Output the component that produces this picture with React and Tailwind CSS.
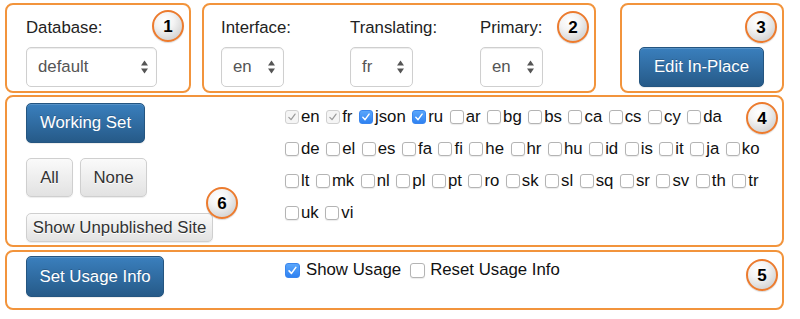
const rows = [
  [['en', 'lock'], ['fr', 'lock'], ['json', 'on'], ['ru', 'on'], 'ar', 'bg', 'bs', 'ca', 'cs', 'cy', 'da'],
  ['de', 'el', 'es', 'fa', 'fi', 'he', 'hr', 'hu', 'id', 'is', 'it', 'ja', 'ko'],
  ['lt', 'mk', 'nl', 'pl', 'pt', 'ro', 'sk', 'sl', 'sq', 'sr', 'sv', 'th', 'tr'],
  ['uk', 'vi'],
];

function Badge({ n, className }) {
  return (
    <div
      className={`absolute w-8 h-8 rounded-full border-2 border-[#ec7b2e] bg-[radial-gradient(circle_at_38%_30%,#ffffff_0%,#f4f4f4_35%,#c4c4c4_100%)] flex items-center justify-center text-[17px] font-bold text-black leading-none shadow-[0_1px_1px_rgba(0,0,0,0.15)] ${className}`}
    >
      {n}
    </div>
  );
}

function Check({ state, big }) {
  const size = big ? 'w-[15px] h-[15px]' : 'w-[14px] h-[14px]';
  if (state === 'on') {
    return (
      <span className={`${size} shrink-0 rounded-[3px] bg-[linear-gradient(to_bottom,#5aa6fb,#2f82f2)] border border-[#3a86ee] flex items-center justify-center`}>
        <svg viewBox="0 0 14 14" className="w-full h-full">
          <path d="M3.3 7.4 L5.9 10.1 L10.6 3.6" fill="none" stroke="#fff" strokeWidth="1.7" strokeLinecap="round" strokeLinejoin="round" />
        </svg>
      </span>
    );
  }
  if (state === 'lock') {
    return (
      <span className={`${size} shrink-0 rounded-[3px] bg-[#f5f5f5] border border-[#d0d0d0] flex items-center justify-center`}>
        <svg viewBox="0 0 14 14" className="w-full h-full">
          <path d="M3.3 7.4 L5.9 10.1 L10.6 3.6" fill="none" stroke="#9a9a9a" strokeWidth="1.4" strokeLinecap="round" strokeLinejoin="round" />
        </svg>
      </span>
    );
  }
  return (
    <span className={`${size} shrink-0 rounded-[3px] bg-white border border-[#b4b4b4] shadow-[0_1px_1px_rgba(0,0,0,0.08)]`} />
  );
}

function Select({ value, wide }) {
  return (
    <div
      className={`${wide ? 'w-[131px]' : 'w-[63px]'} h-[40px] rounded-[5px] border border-[#cfcfcf] bg-white shadow-[inset_0_1px_1px_rgba(0,0,0,0.075)] flex items-center justify-between pl-[11px] pr-[8px] text-[#555] text-[16.8px]`}
    >
      <span>{value}</span>
      <svg width="7" height="14" viewBox="0 0 7 14">
        <polygon points="3.5,0.5 7,5.5 0,5.5" fill="#555" />
        <polygon points="0,8.5 7,8.5 3.5,13.5" fill="#555" />
      </svg>
    </div>
  );
}

const primaryBtn =
  'rounded-[5px] border border-[#245580] bg-[linear-gradient(to_bottom,#3a7fbd,#265a88)] text-white text-[16.8px] [text-shadow:0_-1px_0_rgba(0,0,0,0.2)] shadow-[inset_0_1px_0_rgba(255,255,255,0.15),0_1px_1px_rgba(0,0,0,0.075)] flex items-center justify-center';
const defaultBtn =
  'rounded-[5px] border border-[#cfcfcf] bg-[linear-gradient(to_bottom,#fafafa,#e2e2e2)] text-[#333] text-[16.8px] [text-shadow:0_1px_0_#fff] shadow-[inset_0_1px_0_rgba(255,255,255,0.15),0_1px_1px_rgba(0,0,0,0.075)] flex items-center justify-center';

export default function App() {
  return (
    <div className="w-[800px] h-[319px] bg-white pt-[3px] pl-[5px] font-['Liberation_Sans',Arial,sans-serif] text-[#222] leading-[24px]">
      {/* top row */}
      <div className="flex h-[90px]">
        <div className="relative w-[186px] h-full border-2 border-[#f2943c] rounded-[8px] pt-[11px] pl-[19px]">
          <div className="text-[16.8px] mb-[7px]">Database:</div>
          <Select value="default" wide />
          <Badge n="1" className="left-[145px] top-[5px]" />
        </div>

        <div className="relative ml-[11px] w-[394px] h-full border-2 border-[#f2943c] rounded-[8px] pt-[11px] pl-[17px] flex">
          <div className="w-[129px]">
            <div className="text-[16.8px] mb-[7px]">Interface:</div>
            <Select value="en" />
          </div>
          <div className="w-[130px]">
            <div className="text-[16.8px] mb-[7px]">Translating:</div>
            <Select value="fr" />
          </div>
          <div>
            <div className="text-[16.8px] mb-[7px]">Primary:</div>
            <Select value="en" />
          </div>
          <Badge n="2" className="left-[353px] top-[6px]" />
        </div>

        <div className="relative ml-[24px] w-[164px] h-full border-2 border-[#f2943c] rounded-[8px] pt-[42px] pl-[17px]">
          <button className={`${primaryBtn} w-[125px] h-[40px]`}>Edit In-Place</button>
          <Badge n="3" className="left-[123px] top-[6px]" />
        </div>
      </div>

      {/* working set */}
      <div className="relative mt-[2px] w-[779px] h-[152px] border-2 border-[#f2943c] rounded-[8px] flex">
        <div className="w-[278px] shrink-0 pt-[6px] pl-[19px]">
          <button className={`${primaryBtn} w-[119px] h-[40px]`}>Working Set</button>
          <div className="flex gap-[7px] mt-[15px]">
            <button className={`${defaultBtn} w-[47px] h-[39px]`}>All</button>
            <button className={`${defaultBtn} w-[67px] h-[39px]`}>None</button>
          </div>
          <button className={`${defaultBtn} mt-[16px] w-[187px] h-[29px]`}>Show Unpublished Site</button>
        </div>
        <div className="pt-[4px] text-[16.8px] text-[#111]">
          {rows.map((row, i) => (
            <div key={i} className="h-[32px] flex items-center gap-x-[6.5px]">
              {row.map((item) => {
                const [code, state] = Array.isArray(item) ? item : [item, 'off'];
                return (
                  <label key={code} className="flex items-center gap-[2px]">
                    <Check state={state} />
                    <span>{code}</span>
                  </label>
                );
              })}
            </div>
          ))}
        </div>
        <Badge n="4" className="left-[739px] top-[5px]" />
        <Badge n="6" className="left-[199px] top-[90px]" />
      </div>

      {/* usage */}
      <div className="relative mt-[3px] w-[779px] h-[60px] border-2 border-[#f2943c] rounded-[8px] flex items-start">
        <div className="w-[278px] shrink-0 pt-[4px] pl-[19px]">
          <button className={`${primaryBtn} w-[138px] h-[41px]`}>Set Usage Info</button>
        </div>
        <div className="mt-[6px] h-[24px] flex items-center text-[16.8px] text-[#111]">
          <label className="flex items-center gap-[6px]">
            <Check state="on" big />
            <span>Show Usage</span>
          </label>
          <label className="flex items-center gap-[5px] ml-[9px]">
            <Check state="off" big />
            <span>Reset Usage Info</span>
          </label>
        </div>
        <Badge n="5" className="left-[739px] top-[7px]" />
      </div>
    </div>
  );
}
